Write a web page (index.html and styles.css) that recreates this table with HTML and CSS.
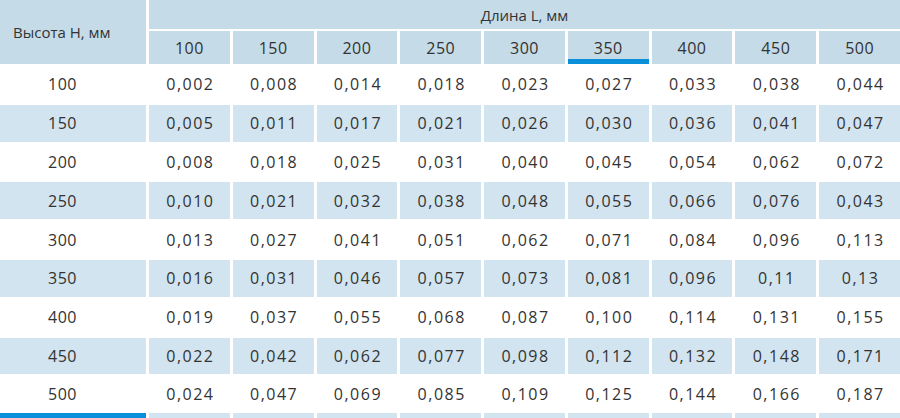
FILE: index.html
```html
<!DOCTYPE html>
<html lang="ru">
<head>
<meta charset="utf-8">
<title>Таблица</title>
<link rel="stylesheet" href="styles.css">
</head>
<body>
<div class="table">
  <div class="hcell corner">Высота Н, мм</div>
  <div class="hcell title">Длина L, мм</div>
  <div class="hcell">100</div>
  <div class="hcell">150</div>
  <div class="hcell">200</div>
  <div class="hcell">250</div>
  <div class="hcell">300</div>
  <div class="hcell active">350</div>
  <div class="hcell">400</div>
  <div class="hcell">450</div>
  <div class="hcell">500</div>

  <div class="cell first">100</div><div class="cell">0,002</div><div class="cell">0,008</div><div class="cell">0,014</div><div class="cell">0,018</div><div class="cell">0,023</div><div class="cell">0,027</div><div class="cell">0,033</div><div class="cell">0,038</div><div class="cell">0,044</div>

  <div class="cell first alt">150</div><div class="cell alt">0,005</div><div class="cell alt">0,011</div><div class="cell alt">0,017</div><div class="cell alt">0,021</div><div class="cell alt">0,026</div><div class="cell alt">0,030</div><div class="cell alt">0,036</div><div class="cell alt">0,041</div><div class="cell alt">0,047</div>

  <div class="cell first">200</div><div class="cell">0,008</div><div class="cell">0,018</div><div class="cell">0,025</div><div class="cell">0,031</div><div class="cell">0,040</div><div class="cell">0,045</div><div class="cell">0,054</div><div class="cell">0,062</div><div class="cell">0,072</div>

  <div class="cell first alt">250</div><div class="cell alt">0,010</div><div class="cell alt">0,021</div><div class="cell alt">0,032</div><div class="cell alt">0,038</div><div class="cell alt">0,048</div><div class="cell alt">0,055</div><div class="cell alt">0,066</div><div class="cell alt">0,076</div><div class="cell alt">0,043</div>

  <div class="cell first">300</div><div class="cell">0,013</div><div class="cell">0,027</div><div class="cell">0,041</div><div class="cell">0,051</div><div class="cell">0,062</div><div class="cell">0,071</div><div class="cell">0,084</div><div class="cell">0,096</div><div class="cell">0,113</div>

  <div class="cell first alt">350</div><div class="cell alt">0,016</div><div class="cell alt">0,031</div><div class="cell alt">0,046</div><div class="cell alt">0,057</div><div class="cell alt">0,073</div><div class="cell alt">0,081</div><div class="cell alt">0,096</div><div class="cell alt">0,11</div><div class="cell alt">0,13</div>

  <div class="cell first">400</div><div class="cell">0,019</div><div class="cell">0,037</div><div class="cell">0,055</div><div class="cell">0,068</div><div class="cell">0,087</div><div class="cell">0,100</div><div class="cell">0,114</div><div class="cell">0,131</div><div class="cell">0,155</div>

  <div class="cell first alt">450</div><div class="cell alt">0,022</div><div class="cell alt">0,042</div><div class="cell alt">0,062</div><div class="cell alt">0,077</div><div class="cell alt">0,098</div><div class="cell alt">0,112</div><div class="cell alt">0,132</div><div class="cell alt">0,148</div><div class="cell alt">0,171</div>

  <div class="cell first">500</div><div class="cell">0,024</div><div class="cell">0,047</div><div class="cell">0,069</div><div class="cell">0,085</div><div class="cell">0,109</div><div class="cell">0,125</div><div class="cell">0,144</div><div class="cell">0,166</div><div class="cell">0,187</div>

  <div class="foot first-foot"></div>
  <div class="foot"></div><div class="foot"></div><div class="foot"></div><div class="foot"></div><div class="foot"></div><div class="foot"></div><div class="foot"></div><div class="foot"></div><div class="foot"></div>
</div>
</body>
</html>
```

FILE: styles.css
```css
html, body {
  margin: 0;
  padding: 0;
  background: #ffffff;
}

body {
  font-family: "Open Sans", "Noto Sans", sans-serif;
  font-size: 16px;
  color: #333333;
  overflow: hidden;
}

.table {
  width: 900px;
  display: grid;
  grid-template-columns: 146px repeat(9, 1fr);
  grid-template-rows: 29px 33px repeat(8, 36.8px) 34.8px 5px;
  column-gap: 3px;
  row-gap: 2px;
}

.hcell {
  background: #c5dbe8;
  display: flex;
  align-items: center;
  justify-content: center;
  position: relative;
  padding-top: 1px;
  letter-spacing: 0.5px;
}

.corner {
  grid-row: 1 / span 2;
  justify-content: flex-start;
  align-items: center;
  padding: 0 0 0 13px;
  font-size: 15px;
  letter-spacing: 0;
}

.title {
  grid-column: 2 / span 9;
  padding-top: 1px;
  font-size: 15px;
  letter-spacing: 0;
}

.active::after {
  content: "";
  position: absolute;
  left: 0;
  right: 0;
  bottom: 0;
  height: 5px;
  background: #0a8fdb;
}

.cell {
  display: flex;
  align-items: center;
  justify-content: center;
  background: #ffffff;
  letter-spacing: 1.5px;
  padding-left: 2px;
}

.cell.first {
  letter-spacing: 0.5px;
  padding: 0 21px 0 0;
}

.cell.alt {
  background: #d2e4ef;
}

.foot {
  background: #d2e4ef;
}

.foot.first-foot {
  background: #0a8fdb;
}
```
